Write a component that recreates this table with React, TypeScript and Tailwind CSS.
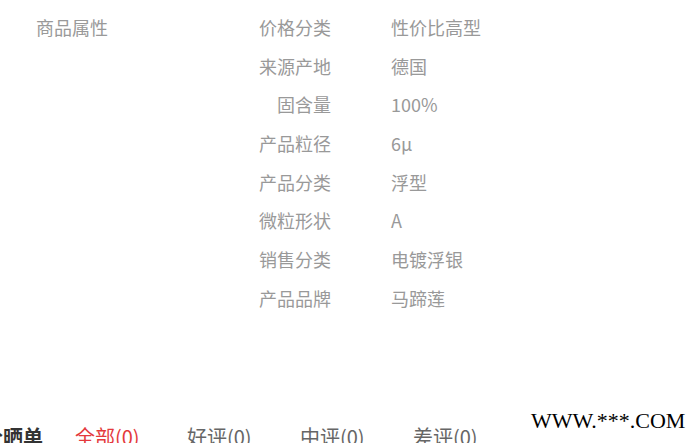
const attrs: [string, string][] = [
  ["价格分类", "性价比高型"],
  ["来源产地", "德国"],
  ["固含量", "100%"],
  ["产品粒径", "6μ"],
  ["产品分类", "浮型"],
  ["微粒形状", "A"],
  ["销售分类", "电镀浮银"],
  ["产品品牌", "马蹄莲"],
];

const tabs = ["全部(0)", "好评(0)", "中评(0)", "差评(0)"];

export default function App() {
  return (
    <div
      className="relative h-[443px] w-[700px] overflow-hidden bg-white"
      style={{ fontFamily: '"Microsoft YaHei", "Noto Sans CJK SC", "Noto Sans", sans-serif' }}
    >
      {/* 商品属性 */}
      <section className="flex pl-[36px] pt-[8px] text-[18px] text-[#999]">
        <div className="w-[223px] leading-[38.7px]">商品属性</div>
        <div className="flex flex-col">
          {attrs.map(([k, v]) => (
            <div key={k} className="flex h-[38.7px] items-center">
              <span className="w-[72px] text-right">{k}</span>
              <span className="ml-[60px]">{v}</span>
            </div>
          ))}
        </div>
      </section>

      {/* 评价晒单 */}
      <section className="mt-[105px] flex items-center text-[20px] leading-[28px]">
        <h3 className="-ml-[37px] w-[112px] shrink-0 font-bold text-[#333]">评价晒单</h3>
        {tabs.map((t, i) => (
          <span
            key={t}
            className={i === 0 ? "w-[112px] shrink-0 text-[#e4393c]" : "w-[113px] shrink-0 text-[#666]"}
          >
            {t}
          </span>
        ))}
      </section>

      <div
        className="absolute left-[531px] top-[407px] text-[22px] leading-[28px] text-black"
        style={{ fontFamily: '"Liberation Serif", "Times New Roman", serif' }}
      >
        WWW.***.COM
      </div>
    </div>
  );
}
